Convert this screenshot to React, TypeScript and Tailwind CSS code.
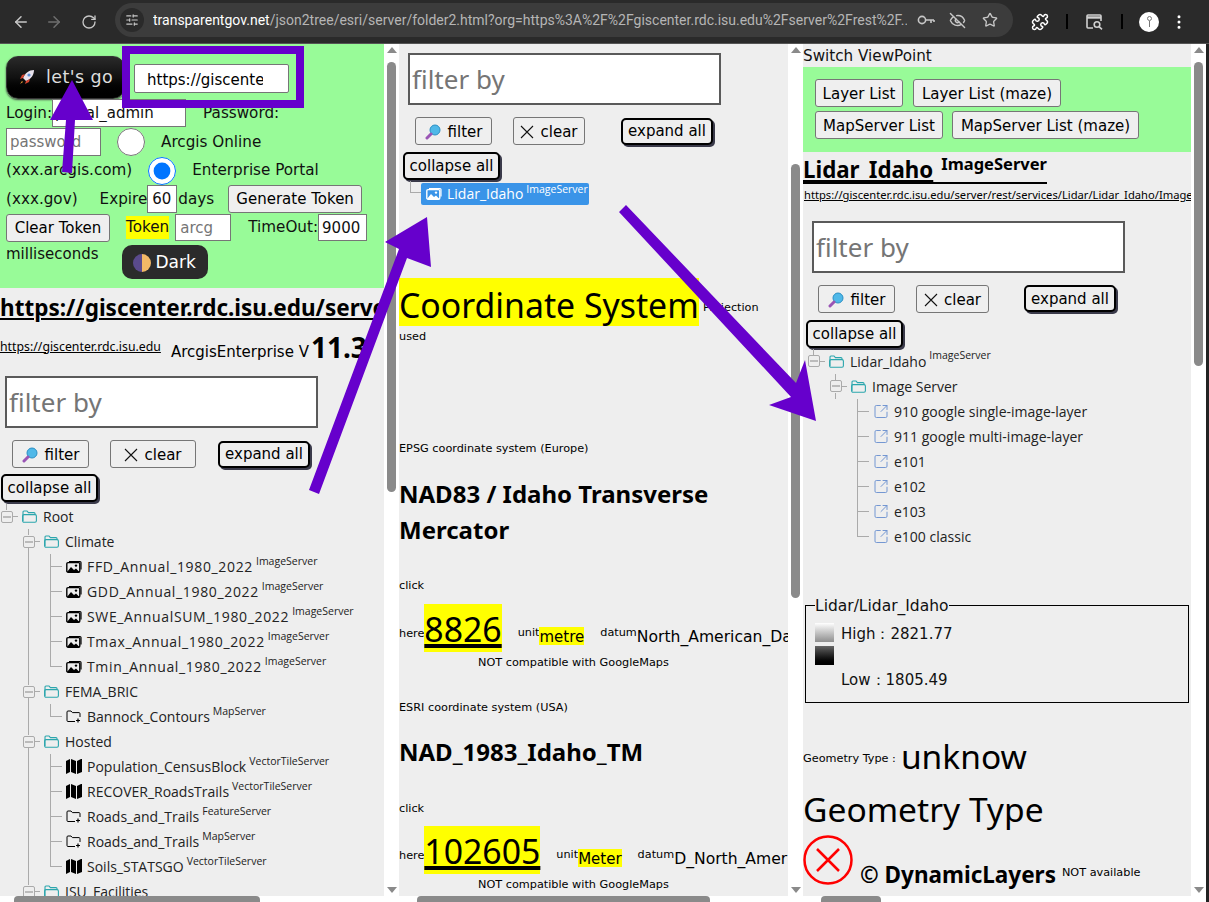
import { ArrowLeft, ArrowRight, RotateCw, SlidersHorizontal, EyeOff, Star, Puzzle, MoreVertical, SquareArrowOutUpRight } from "lucide-react"

const uiFont = "font-['DejaVu_Sans',sans-serif]"
const treeFont = "font-['Open_Sans',sans-serif]"
const titleFont = "font-['Noto_Sans',sans-serif]"

type TreeKind = "folder" | "image" | "mapserver" | "vector" | "link"
type TreeNode = { level: number; kind: TreeKind; label: string; sup?: string; guides?: number[]; last?: boolean; open?: boolean; digits?: boolean }

function FolderIcon() {
  return (
    <svg width="15" height="13" viewBox="0 0 15 13" fill="none" stroke="#2ba6ad" strokeWidth="1.1">
      <path d="M1 11V2.2C1 1.5 1.4 1 2 1h3l1.4 1.6H12c.7 0 1 .4 1 1V5" />
      <rect x="0.6" y="4.6" width="13.8" height="7.6" rx="1.4" />
    </svg>
  )
}

function ImageIcon({ white }: { white?: boolean }) {
  const c = white ? "#ffffff" : "#000000"
  return (
    <svg width="16" height="13" viewBox="0 0 16 13" fill="none" className="shrink-0">
      <path d="M3 1.5h11c.6 0 1 .4 1 1v7" stroke={c} strokeWidth="1.2" />
      <rect x="0.8" y="2.6" width="13" height="9.6" rx="1.2" stroke={c} strokeWidth="1.4" />
      <circle cx="10" cy="5.6" r="1.2" fill={c} />
      <path d="M1 12l4-5 3 3 2-1.5 3.5 3.5z" fill={c} />
    </svg>
  )
}

function MapServerIcon() {
  return (
    <svg width="16" height="13" viewBox="0 0 16 13" fill="none" stroke="#000" strokeWidth="1">
      <path d="M9 11.5H2c-.7 0-1-.4-1-1V2c0-.6.3-1 1-1h3l1.4 1.6H13c.6 0 1 .4 1 1V7" />
      <path d="M12 8.5v4M10 10.5h4" strokeWidth="1.2" />
    </svg>
  )
}

function VectorIcon() {
  return (
    <svg width="16" height="15" viewBox="0 0 16 15" fill="#000">
      <path d="M0 2l4-2v13l-4 2zM5 0l5 2v13l-5-2zM11 2l4-2h1v13l-5 2z" />
    </svg>
  )
}

function NodeIcon({ kind }: { kind: TreeKind }) {
  if (kind === "folder") return <FolderIcon />
  if (kind === "image") return <ImageIcon />
  if (kind === "mapserver") return <MapServerIcon />
  if (kind === "vector") return <VectorIcon />
  return <SquareArrowOutUpRight size={17} strokeWidth={1.4} color="#6a90d0" />
}

function Toggle({ more }: { more?: boolean }) {
  return (
    <div className="flex flex-col w-[22px] h-[25px] shrink-0">
      <div className="ml-[6px] h-[6px] border-l border-[#aaa]" />
      <div className="flex items-center h-[13px]">
        <div className="ml-[1px] w-[12px] h-[12px] border border-[#aaa] rounded-[2px] flex items-center justify-center bg-[#eee]">
          <div className="w-[8px] h-[2px] bg-[#bbb]" />
        </div>
        <div className="w-[5px] border-t border-[#aaa]" />
      </div>
      {more && <div className="ml-[6px] h-[6px] border-l border-[#aaa]" />}
    </div>
  )
}

function Connector({ last }: { last?: boolean }) {
  return (
    <div className="w-[22px] h-[25px] shrink-0 flex flex-col">
      <div className="ml-[6px] w-[12px] h-[13px] border-l border-b border-[#aaa]" />
      {!last && <div className="ml-[6px] h-[12px] border-l border-[#aaa]" />}
    </div>
  )
}

function TreeRow({ node }: { node: TreeNode }) {
  const cells = []
  const isFolder = node.kind === "folder"
  for (let i = 0; i < node.level; i++) {
    cells.push(
      <div key={i} className="w-[22px] h-[25px] shrink-0">
        {node.guides?.includes(i) && <div className="ml-[6px] h-full border-l border-[#aaa]" />}
      </div>
    )
  }
  return (
    <div className={`flex items-center h-[25px] whitespace-nowrap text-[14px] text-[#222] ${treeFont}`}>
      {cells}
      {isFolder ? <Toggle more={node.open} /> : <Connector last={node.last} />}
      <div className={`flex justify-center shrink-0 ${isFolder ? "w-[15px]" : "w-[16px]"}`}>
        <NodeIcon kind={node.kind} />
      </div>
      <span className={`${isFolder ? "ml-[6px]" : "ml-[5px]"} ${node.digits ? "tracking-[0.65px]" : ""}`}>{node.label}</span>
      {node.sup && <span className="ml-[3px] text-[10.5px] relative -top-[5px]">{node.sup}</span>}
    </div>
  )
}

const mainTree: TreeNode[] = [
  { level: 0, kind: "folder", label: "Root" },
  { level: 1, kind: "folder", label: "Climate", open: true },
  { level: 2, kind: "image", label: "FFD_Annual_1980_2022", sup: "ImageServer", guides: [1], digits: true },
  { level: 2, kind: "image", label: "GDD_Annual_1980_2022", sup: "ImageServer", guides: [1], digits: true },
  { level: 2, kind: "image", label: "SWE_AnnualSUM_1980_2022", sup: "ImageServer", guides: [1], digits: true },
  { level: 2, kind: "image", label: "Tmax_Annual_1980_2022", sup: "ImageServer", guides: [1], digits: true },
  { level: 2, kind: "image", label: "Tmin_Annual_1980_2022", sup: "ImageServer", guides: [1], last: true, digits: true },
  { level: 1, kind: "folder", label: "FEMA_BRIC", open: true },
  { level: 2, kind: "mapserver", label: "Bannock_Contours", sup: "MapServer", guides: [1], last: true },
  { level: 1, kind: "folder", label: "Hosted", open: true },
  { level: 2, kind: "vector", label: "Population_CensusBlock", sup: "VectorTileServer", guides: [1] },
  { level: 2, kind: "vector", label: "RECOVER_RoadsTrails", sup: "VectorTileServer", guides: [1] },
  { level: 2, kind: "mapserver", label: "Roads_and_Trails", sup: "FeatureServer", guides: [1] },
  { level: 2, kind: "mapserver", label: "Roads_and_Trails", sup: "MapServer", guides: [1] },
  { level: 2, kind: "vector", label: "Soils_STATSGO", sup: "VectorTileServer", guides: [1], last: true },
  { level: 1, kind: "folder", label: "ISU_Facilities", open: true },
]

const layerTree: TreeNode[] = [
  { level: 0, kind: "folder", label: "Lidar_Idaho", sup: "ImageServer" },
  { level: 1, kind: "folder", label: "Image Server", open: true },
  { level: 2, kind: "link", label: "910 google single-image-layer" },
  { level: 2, kind: "link", label: "911 google multi-image-layer" },
  { level: 2, kind: "link", label: "e101" },
  { level: 2, kind: "link", label: "e102" },
  { level: 2, kind: "link", label: "e103" },
  { level: 2, kind: "link", label: "e100 classic", last: true },
]

function GrayBtn({ children, className = "" }: { children: React.ReactNode; className?: string }) {
  return (
    <button className={`h-[28px] pt-[2px] border border-[#767676] rounded-[3px] bg-[#efefef] text-[15px] text-black whitespace-nowrap flex items-center justify-center ${uiFont} ${className}`}>
      {children}
    </button>
  )
}

function ShadowBtn({ children, className = "" }: { children: React.ReactNode; className?: string }) {
  return (
    <button className={`h-[27px] pt-[1px] border-2 border-black rounded-[5px] bg-[#eee] shadow-[2px_2px_0_#3a3a4a] text-[15px] text-black whitespace-nowrap flex items-center justify-center ${uiFont} ${className}`}>
      {children}
    </button>
  )
}

function Magnifier() {
  return (
    <svg width="16" height="16" viewBox="0 0 16 16" className="mr-[7px]">
      <circle cx="10" cy="6" r="5" fill="#4fb8e8" stroke="#2a8fc4" strokeWidth="1" />
      <path d="M6 10L2 14" stroke="#9a55b5" strokeWidth="3" strokeLinecap="round" />
    </svg>
  )
}

function ClearX() {
  return (
    <svg width="14" height="14" viewBox="0 0 14 14" className="mr-[6px]" stroke="#111" strokeWidth="1.1">
      <path d="M1 1l12 12M13 1L1 13" />
    </svg>
  )
}

// filter input + the four tree buttons, repeated in all three panes
function FilterBlock({ inputMl, filterMl, clearMl, clearW, expandMl, collapseCls }: { inputMl: string; filterMl: string; clearMl: string; clearW: string; expandMl: string; collapseCls: string }) {
  return (
    <div>
      <input
        placeholder="filter by"
        className={`block w-[313px] h-[52px] border-2 border-[#5a5a5a] bg-white px-[2px] text-[26px] text-black placeholder:text-[#757575] ${titleFont} ${inputMl}`}
      />
      <div className="flex items-center mt-[12px]">
        <GrayBtn className={`w-[77px] ${filterMl}`}><Magnifier />filter</GrayBtn>
        <GrayBtn className={`${clearW} ${clearMl}`}><ClearX />clear</GrayBtn>
        <ShadowBtn className={`w-[92px] ${expandMl}`}>expand all</ShadowBtn>
      </div>
      <ShadowBtn className={`w-[97px] h-[28px] ${collapseCls}`}>collapse all</ShadowBtn>
    </div>
  )
}

function VScroll({ thumbTop, thumbH, w }: { thumbTop: string; thumbH: string; w: string }) {
  return (
    <div className={`${w} shrink-0 h-full bg-white flex flex-col items-center`}>
      <div className="mt-[3px] w-0 h-0 border-x-[5px] border-x-transparent border-b-[6px] border-b-[#8a8a8a]" />
      <div className={`w-[9px] rounded-full bg-[#8a8a8a] ${thumbTop} ${thumbH}`} />
      <div className="mt-auto mb-[3px] w-0 h-0 border-x-[5px] border-x-transparent border-t-[6px] border-t-[#8a8a8a]" />
    </div>
  )
}

function HScroll({ left, width }: { left: string; width: string }) {
  return (
    <div className="h-[6px] shrink-0 bg-white flex items-start overflow-hidden">
      <div className={`h-[6px] rounded-t-[4px] bg-[#8a8a8a] ${left} ${width}`} />
    </div>
  )
}

function ChromeBar() {
  return (
    <div className="h-[44px] shrink-0 bg-[#2a2a2a] border-b border-[#555] flex items-center pl-[12px] text-[#c7c7c7]">
      <ArrowLeft size={18} strokeWidth={2} />
      <ArrowRight size={18} strokeWidth={2} className="ml-[15px] text-[#6f6f6f]" />
      <RotateCw size={16} strokeWidth={2} className="ml-[18px]" />
      <div className="ml-[18px] w-[898px] h-[34px] mb-[3px] rounded-full bg-[#3c3c3c] flex items-center font-['Roboto',sans-serif] text-[14px]">
        <div className="ml-[5px] w-[24px] h-[24px] rounded-full bg-[#2a2a2a] flex items-center justify-center">
          <SlidersHorizontal size={14} />
        </div>
        <div className="ml-[9px] w-[754px] overflow-hidden whitespace-nowrap">
          <span className="text-white">transparentgov.net</span>
          <span className="text-[#b5b5b5]">/json2tree/esri/server/folder2.html?org=https%3A%2F%2Fgiscenter.rdc.isu.edu%2Fserver%2Frest%2F...</span>
        </div>
        <svg width="18" height="10" viewBox="0 0 18 10" fill="none" stroke="#c7c7c7" strokeWidth="1.6" className="ml-[10px]">
          <circle cx="5" cy="5" r="3.6" />
          <path d="M9 5h8M14 5v3M17 5v2" />
        </svg>
        <EyeOff size={17} className="ml-[14px]" />
        <Star size={16} className="ml-[16px]" />
      </div>
      <Puzzle size={18} className="ml-[18px] text-white" />
      <div className="ml-[17px] w-[2px] h-[15px] bg-black" />
      <svg width="18" height="16" viewBox="0 0 18 16" fill="none" stroke="#d0d0d0" strokeWidth="1.6" className="ml-[18px]">
        <path d="M7 14H2c-.6 0-1-.4-1-1V2c0-.6.4-1 1-1h12c.6 0 1 .4 1 1v5" />
        <path d="M1 3.5h14" strokeWidth="2.4" />
        <circle cx="11" cy="10.5" r="2.8" />
        <path d="M13 12.6l3 2.8" />
      </svg>
      <div className="ml-[17px] w-[2px] h-[15px] bg-black" />
      <div className="ml-[16px] w-[20px] h-[20px] rounded-full bg-white flex flex-col items-center justify-center">
        <div className="w-[5px] h-[5px] rounded-full border border-[#777]" />
        <div className="w-px h-[6px] bg-[#777]" />
      </div>
      <MoreVertical size={18} className="ml-[11px] text-white" />
    </div>
  )
}

function PaneLeft() {
  return (
    <div className="w-[399px] shrink-0 h-full flex flex-col">
      <div className="flex flex-1 min-h-0">
        <div className={`w-[384px] bg-[#eee] overflow-hidden text-black ${uiFont}`}>
          <div className="w-[384px] h-[244px] bg-[#98fb98] pl-[6px] pt-[11px] text-[15.2px] text-[#111] whitespace-nowrap">
            <div className="flex items-center h-[44px]">
              <button className="w-[119px] h-[43px] rounded-[12px] bg-gradient-to-b from-[#2a2a2a] via-[#111] to-[#000] border border-[#333] text-[#ddd] text-[17.5px] tracking-[0.4px] flex items-center justify-center shadow-[0_1px_2px_#444]">
                <svg width="18" height="18" viewBox="0 0 18 18" className="mr-[10px] shrink-0">
                  <path d="M16 2c-5 0-9 3-11 8l3 3c5-2 8-6 8-11z" fill="#e9e3ee" />
                  <circle cx="11" cy="7" r="1.6" fill="#5b8fd6" />
                  <path d="M5 10l-3 1 2-4 3-1zM8 13l-1 3 4-2 1-3z" fill="#d8442f" />
                  <path d="M4 13l-2 3 3-2z" fill="#f0a030" />
                </svg>
                let's go
              </button>
              <input defaultValue="https://giscenter.rdc.isu.edu/server" className={`ml-[9px] mt-[3px] w-[155px] h-[29px] pt-[2px] border border-[#767676] rounded-[2px] bg-white pl-[12px] pr-[25px] text-[15px] text-black ${uiFont}`} />
            </div>
            <div className="flex items-center h-[28px]">
              <span>Login:</span>
              <input defaultValue="portal_admin" className={`w-[134px] h-[28px] border border-[#767676] bg-white px-[2px] text-[15px] ${uiFont}`} />
              <span className="ml-[17px]">Password:</span>
            </div>
            <div className="flex items-center h-[30px]">
              <input placeholder="password" className={`w-[95px] h-[28px] border border-[#767676] bg-white px-[3px] text-[15px] placeholder:text-[#757575] ${uiFont}`} />
              <input type="radio" name="portal" className="ml-[16px] w-[28px] h-[28px]" />
              <span className="ml-[16px]">Arcgis Online</span>
            </div>
            <div className="flex items-center h-[27px]">
              <span>(xxx.arcgis.com)</span>
              <input type="radio" name="portal" defaultChecked className="ml-[16px] w-[28px] h-[28px]" />
              <span className="ml-[16px]">Enterprise Portal</span>
            </div>
            <div className="flex items-center h-[29px]">
              <span className="pt-[1px]">(xxx.gov)</span>
              <span className="ml-[22px] pt-[1px]">Expire</span>
              <input defaultValue="60" className={`w-[30px] h-[28px] border border-[#767676] bg-white px-[4px] text-[15px] ${uiFont}`} />
              <span className="ml-[1px] pt-[1px]">days</span>
              <GrayBtn className="ml-[14px] w-[134px]">Generate Token</GrayBtn>
            </div>
            <div className="flex items-center h-[29px]">
              <GrayBtn className="w-[104px] h-[27px]">Clear Token</GrayBtn>
              <span className="ml-[16px] bg-[#ffff00]">Token</span>
              <input placeholder="arcg" className={`ml-[6px] w-[56px] h-[27px] border border-[#767676] bg-white px-[4px] text-[15px] placeholder:text-[#757575] ${uiFont}`} />
              <span className="ml-[17px]">TimeOut:</span>
              <input defaultValue="9000" className={`w-[49px] h-[27px] border border-[#767676] bg-white px-[3px] text-[15px] ${uiFont}`} />
            </div>
            <div className="flex items-start mt-[3px]">
              <span className="-mt-[2px] text-[15px]">milliseconds</span>
              <button className="ml-[23px] w-[86px] h-[34px] pt-[2px] rounded-[10px] bg-[#2b2b2b] text-white text-[17px] flex items-center justify-center">
                <span className="w-[18px] h-[18px] rounded-full bg-gradient-to-r from-[#5a4a8c] from-50% to-[#f2b866] to-50% mr-[4px]" />
                Dark
              </button>
            </div>
          </div>
          <div className={`mt-[6px] h-[28px] whitespace-nowrap text-[22.5px] leading-[28px] font-bold underline ${titleFont}`}>https://giscenter.rdc.isu.edu/server</div>
          <div className="flex items-end h-[42px] whitespace-nowrap -mt-[1px]">
            <span className={`text-[12.3px] underline mb-[7px] ${titleFont}`}>https://giscenter.rdc.isu.edu</span>
            <span className="ml-[10px] text-[15px]">ArcgisEnterprise V</span>
            <span className={`ml-[2px] text-[28px] font-bold leading-[32px] ${titleFont}`}>11.3</span>
          </div>
          <div className="mt-[13px]">
            <FilterBlock inputMl="ml-[5px]" filterMl="ml-[12px]" clearMl="ml-[21px]" clearW="w-[86px]" expandMl="ml-[22px]" collapseCls="mt-[6px] ml-[1px]" />
          </div>
          <div className="mt-[2px]">
            {mainTree.map((n, i) => <TreeRow key={i} node={n} />)}
          </div>
        </div>
        <VScroll w="w-[15px]" thumbTop="mt-[9px]" thumbH="h-[430px]" />
      </div>
      <HScroll left="ml-[14px]" width="w-[246px]" />
    </div>
  )
}

function PaneMiddle() {
  return (
    <div className="w-[404px] shrink-0 h-full flex flex-col">
      <div className="flex flex-1 min-h-0">
        <div className={`w-[389px] bg-[#eee] overflow-hidden text-black whitespace-nowrap ${uiFont}`}>
          <div className="pt-[9px]">
            <FilterBlock inputMl="ml-[9px]" filterMl="ml-[16px]" clearMl="ml-[21px]" clearW="w-[72px]" expandMl="ml-[36px]" collapseCls="mt-[7px] ml-[4px]" />
          </div>
          <div className="flex items-center h-[25px] mt-[1px] ml-[5px]">
            <div className="w-[17px] h-[25px] shrink-0">
              <div className="ml-[6px] w-[11px] h-[12px] border-l border-b border-[#aaa]" />
            </div>
            <div className={`w-[168px] h-[22px] rounded-[2px] bg-[#3a94e8] text-white text-[14px] flex items-center pl-[5px] ${treeFont}`}>
              <ImageIcon white />
              <span className="ml-[5px]">Lidar_Idaho</span>
              <span className="ml-[3px] text-[10.5px] relative -top-[4px]">ImageServer</span>
            </div>
          </div>
          <div className="mt-[72px] flex items-end h-[48px]">
            <span className={`bg-[#ffff00] h-[48px] w-[300px] text-[33.8px] leading-[54px] ${titleFont}`}>Coordinate System</span>
            <span className="ml-[4px] text-[11.25px] mb-[9px]">Projection</span>
          </div>
          <div className="mt-[3px] text-[11.25px]">used</div>
          <div className="mt-[95px] text-[11.25px]">EPSG coordinate system (Europe)</div>
          <div className={`mt-[18px] text-[24px] font-bold leading-[36px] w-[340px] whitespace-normal ${titleFont}`}>NAD83 / Idaho Transverse Mercator</div>
          <div className="mt-[30px] text-[11.25px]">click</div>
          <div className="mt-[9px] flex items-start h-[48px]">
            <span className="text-[11.25px] mt-[22px]">here</span>
            <span className={`bg-[#ffff00] h-[48px] text-[33.8px] leading-[50px] underline decoration-[4px] ${titleFont}`}>8826</span>
            <span className="ml-[16px] text-[11.25px] mt-[21px]">unit</span>
            <span className={`mt-[23px] h-[18px] bg-[#ffff00] text-[15px] leading-[20px] ${uiFont}`}>metre</span>
            <span className="ml-[16px] text-[11.25px] mt-[21px]">datum</span>
            <span className={`mt-[23px] text-[15.6px] leading-[20px] ${uiFont}`}>North_American_Datum_1983</span>
          </div>
          <div className="mt-[3px] ml-[79px] text-[11.25px]">NOT compatible with GoogleMaps</div>
          <div className="mt-[28px] text-[11.25px]">ESRI coordinate system (USA)</div>
          <div className={`mt-[18px] text-[24px] font-bold leading-[36px] ${titleFont}`}>NAD_1983_Idaho_TM</div>
          <div className="mt-[31px] text-[11.25px]">click</div>
          <div className="mt-[8px] flex items-start h-[48px]">
            <span className="text-[11.25px] mt-[22px]">here</span>
            <span className={`bg-[#ffff00] h-[48px] text-[33.8px] leading-[50px] underline decoration-[4px] ${titleFont}`}>102605</span>
            <span className="ml-[16px] text-[11.25px] mt-[21px]">unit</span>
            <span className={`mt-[23px] h-[18px] bg-[#ffff00] text-[15px] leading-[20px] ${uiFont}`}>Meter</span>
            <span className="ml-[16px] text-[11.25px] mt-[21px]">datum</span>
            <span className={`mt-[23px] text-[15.6px] leading-[20px] ${uiFont}`}>D_North_American_1983</span>
          </div>
          <div className="mt-[3px] ml-[79px] text-[11.25px]">NOT compatible with GoogleMaps</div>
        </div>
        <VScroll w="w-[15px]" thumbTop="mt-[111px]" thumbH="h-[434px]" />
      </div>
      <HScroll left="ml-[18px]" width="w-[293px]" />
    </div>
  )
}

function PaneRight() {
  return (
    <div className="w-[403px] shrink-0 h-full flex flex-col">
      <div className="flex flex-1 min-h-0">
        <div className={`w-[388px] bg-[#eee] overflow-hidden text-black whitespace-nowrap ${uiFont}`}>
          <div className="h-[23px] pt-[1px] text-[15.2px] leading-[23px] text-[#111]">Switch ViewPoint</div>
          <div className="h-[85px] bg-[#98fb98] pl-[12px] pt-[12px]">
            <div className="flex gap-[10px]">
              <GrayBtn className="w-[88px]">Layer List</GrayBtn>
              <GrayBtn className="w-[148px]">Layer List (maze)</GrayBtn>
            </div>
            <div className="flex gap-[9px] mt-[4px]">
              <GrayBtn className="w-[128px]">MapServer List</GrayBtn>
              <GrayBtn className="w-[187px]">MapServer List (maze)</GrayBtn>
            </div>
          </div>
          <div className={`mt-[1px] h-[31px] w-[244px] border-b-2 border-black font-bold flex items-end ${titleFont}`}>
            <span className="text-[22.3px] leading-[24px] underline">Lidar_Idaho</span>
            <span className="ml-[8px] text-[16.5px] leading-[24px] relative -top-[6px]">ImageServer</span>
          </div>
          <div className={`mt-[3px] ml-[1px] text-[11.2px] underline ${titleFont}`}>https://giscenter.rdc.isu.edu/server/rest/services/Lidar/Lidar_Idaho/ImageServer</div>
          <div className="mt-[17px]">
            <FilterBlock inputMl="ml-[9px]" filterMl="ml-[15px]" clearMl="ml-[21px]" clearW="w-[73px]" expandMl="ml-[35px]" collapseCls="mt-[7px] ml-[3px]" />
          </div>
          <div className="ml-[4px] mt-[1px]">
            {layerTree.map((n, i) => <TreeRow key={i} node={n} />)}
          </div>
          <fieldset className="mt-[48px] ml-[2px] w-[384px] h-[106px] border border-black px-[9px] text-[15px] text-[#111]">
            <legend className="leading-[18px] text-[15.5px]">Lidar/Lidar_Idaho</legend>
            <div className="flex mt-[7px]">
              <div className="w-[19px] flex flex-col gap-[4px] mt-[1px]">
                <div className="h-[19px] bg-gradient-to-b from-white to-[#8f8f8f]" />
                <div className="h-[19px] bg-gradient-to-b from-[#666] to-black" />
              </div>
              <div className="ml-[7px] mt-[2px]">
                <div className="h-[23px] leading-[20px]">High：2821.77</div>
                <div className="mt-[23px] leading-[20px]">Low：1805.49</div>
              </div>
            </div>
          </fieldset>
          <div className="mt-[29px] flex items-center h-[48px]">
            <span className="text-[11.25px] mt-[8px]">Geometry Type :</span>
            <span className={`ml-[5px] text-[33.5px] ${titleFont}`}>unknow</span>
          </div>
          <div className={`mt-[2px] text-[33.6px] leading-[54px] ${titleFont}`}>Geometry Type</div>
          <div className="flex items-end mt-[1px]">
            <svg width="50" height="50" viewBox="0 0 50 50" fill="none" stroke="#ff0000" className="-mt-[2px] shrink-0">
              <circle cx="25" cy="25" r="23.5" strokeWidth="2.5" />
              <path d="M14 14l22 22M36 14L14 36" strokeWidth="2.5" />
            </svg>
            <span className={`ml-[7px] text-[22.5px] font-bold leading-[24px] -mb-[2px] ${titleFont}`}>© DynamicLayers</span>
            <span className="ml-[6px] text-[11.25px] mb-[3px]">NOT available</span>
          </div>
        </div>
        <VScroll w="w-[15px]" thumbTop="mt-[9px]" thumbH="h-[304px]" />
      </div>
      <HScroll left="ml-[18px]" width="w-[60px]" />
    </div>
  )
}

export default function App() {
  return (
    <div className="relative w-[1209px] h-[902px] overflow-hidden flex flex-col bg-[#222]">
      <ChromeBar />
      <div className="flex flex-1 min-h-0">
        <PaneLeft />
        <PaneMiddle />
        <PaneRight />
      </div>
      {/* annotation drawn over the screenshot */}
      <div className="absolute left-[122px] top-[46px] w-[182px] h-[62px] border-[8px] border-[#6600cc]" />
      <svg className="absolute left-0 top-0 pointer-events-none" width="1209" height="902" fill="#6600cc" stroke="none">
        <path d="M62 172l10 1 3-53h18L72 80 50 120h16z" />
        <path d="M309 490l10 4 88-236 24 9-4-50-42 25 14 7z" />
        <path d="M619 212l7-7 170 178 9-23 11 61-47-16 22-8z" />
      </svg>
    </div>
  )
}
